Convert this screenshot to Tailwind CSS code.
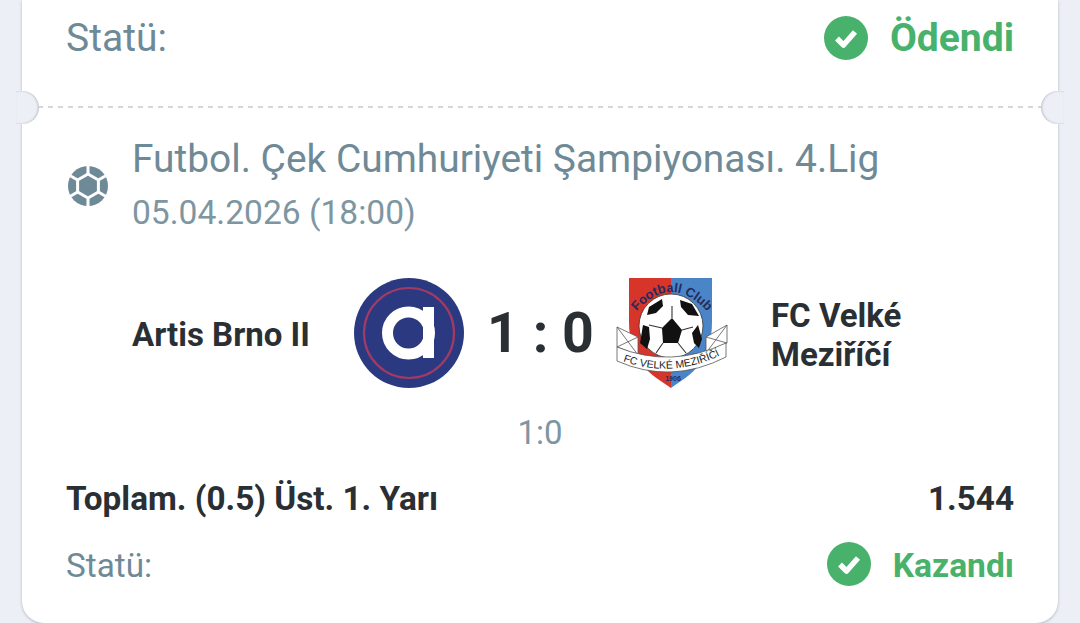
<!DOCTYPE html>
<html>
  <head>
    <meta charset="UTF-8" />
    <script src="https://cdn.jsdelivr.net/npm/@tailwindcss/browser@4"></script>
  </head>
  <body class="bg-[#eceff5] overflow-hidden font-['Roboto',sans-serif]">
    <div class="relative h-[623px] w-[1036px] ml-[22px] bg-white rounded-b-[22px] shadow-[0_1px_3px_rgba(70,80,100,0.35)]">
      <!-- paid row -->
      <div class="flex items-center justify-between h-[76px] px-[44px]">
        <span class="text-[39px] text-[#6f8a97]">Statü:</span>
        <div class="flex items-center gap-[22px]">
          <svg class="w-[44px] h-[44px] mt-[-1px]" viewBox="0 0 44 44">
            <circle cx="22" cy="22" r="22" fill="#48b16b" />
            <path d="M13 22.5l6.5 6.5L31 16" fill="none" stroke="#fff" stroke-width="5.5" stroke-linejoin="round" />
          </svg>
          <span class="text-[39px] font-bold text-[#48b16b]">Ödendi</span>
        </div>
      </div>

      <!-- perforation -->
      <div class="mt-[30px] mx-[16px] h-[2px] bg-[repeating-linear-gradient(90deg,#d3d6da_0_5px,transparent_5px_10px)]"></div>
      <div class="absolute left-[-6px] top-[91px] w-[23px] h-[33px] rounded-r-full bg-[#eceff5] shadow-[inset_-1px_0_2px_rgba(70,80,100,0.3)]"></div>
      <div class="absolute right-[-6px] top-[91px] w-[23px] h-[33px] rounded-l-full bg-[#eceff5] shadow-[inset_1px_0_2px_rgba(70,80,100,0.3)]"></div>

      <!-- league -->
      <div class="flex items-center gap-[24px] pl-[46px] mt-[27px]">
        <svg class="w-[40px] h-[40px] shrink-0 mt-[3px]" viewBox="-20 -20 40 40">
          <circle r="20" fill="#6f8a97" />
          <g stroke="#fff" stroke-width="3" fill="none">
            <polygon points="0,-12 10.4,-6 10.4,6 0,12 -10.4,6 -10.4,-6" />
            <path d="M0-12V-21M10.4-6L19-11M10.4 6L19 11M0 12V21M-10.4 6L-19 11M-10.4-6L-19-11" />
          </g>
        </svg>
        <div class="flex flex-col">
          <span class="text-[38.9px] leading-[48px] text-[#6f8a97]">Futbol. Çek Cumhuriyeti Şampiyonası. 4.Lig</span>
          <span class="text-[33.6px] leading-[40px] mt-[10px] text-[#7d96a2]">05.04.2026 (18:00)</span>
        </div>
      </div>

      <!-- teams -->
      <div class="flex items-center mt-[44px] h-[112px] pl-[110px]">
        <span class="w-[221px] mt-[3px] text-[33px] font-bold text-[#2a2f33]">Artis Brno II</span>
        <svg class="w-[112px] h-[112px] shrink-0" viewBox="0 0 112 112">
          <circle cx="56" cy="56" r="55" fill="#2b3a80" />
          <circle cx="56" cy="56" r="45" fill="none" stroke="#a33a64" stroke-width="2.2" />
          <circle cx="55.5" cy="56" r="21" fill="none" stroke="#fff" stroke-width="11" />
          <rect x="70" y="30" width="11" height="51" fill="#fff" />
        </svg>
        <span class="w-[151px] mt-[1px] text-center text-[55.5px] leading-none font-bold text-[#2a2f33]">1 : 0</span>
        <svg class="w-[112px] h-[112px] shrink-0" viewBox="0 0 112 112">
          <path d="M13 1H55V111C36 98 13 86 13 45Z" fill="#d8352a" />
          <path d="M55 1H96V45C96 86 74 98 55 111Z" fill="#4a85c8" />
          <defs>
            <path id="arcTop" d="M16 40Q55 -10 96 40" />
            <path id="arcBand" d="M4 83Q55 103 107 77" />
          </defs>
          <circle cx="55" cy="49" r="32" fill="#fff" stroke="#333" stroke-width="0.8" />
          <polygon points="56,41 66,53 62,66 47,66 46,51" fill="#111" />
          <path d="M64 23L76 27L83 39L72 38L65 30Z" fill="#111" />
          <path d="M46 22L33 30L31 38L40 36L47 29Z" fill="#111" />
          <path d="M27 48L24 66L31 72L34 62L33 50ZM82 48L86 62L83 71L78 66L76 56Z" fill="#111" />
          <path d="M56 41V29M46 51L33 48M66 53L77 50M47 66L40 76M62 66L70 76" stroke="#333" stroke-width="1.1" />
          <text font-family="Liberation Sans" font-size="13" font-weight="700" fill="#232c5c" text-anchor="middle"><textPath href="#arcTop" startOffset="50%">Football Club</textPath></text>
          <path d="M1 50L22 60V78L1 70ZM1 50L22 78M22 60L1 70M111 48L90 60V76L111 66ZM111 48L90 76M90 60L111 66" fill="#fff" stroke="#555" stroke-width="0.8" />
          <path d="M1 70Q55 92 110 66V80Q55 108 1 84Z" fill="#fff" stroke="#555" stroke-width="0.8" />
          <text font-family="Liberation Sans" font-size="10.5" fill="#222" text-anchor="middle"><textPath href="#arcBand" startOffset="50%">FC VELKÉ MEZIŘÍČÍ</textPath></text>
          <text x="57" y="104" text-anchor="middle" font-family="Liberation Sans" font-size="7" font-weight="700" fill="#232c5c">1906</text>
        </svg>
        <span class="ml-[43px] mt-[3px] text-[33px] leading-[39px] font-bold text-[#2a2f33]">FC Velké<br />Meziříčí</span>
      </div>

      <div class="text-center text-[33px] leading-[36px] mt-[26px] text-[#7d96a2]">1:0</div>

      <!-- bet -->
      <div class="flex items-center justify-between px-[44px] mt-[29px] leading-[38px] text-[33.3px] font-bold text-[#2a2f33]">
        <span>Toplam. (0.5) Üst. 1. Yarı</span>
        <span>1.544</span>
      </div>

      <!-- won row -->
      <div class="flex items-center justify-between px-[44px] mt-[23px]">
        <span class="text-[33.3px] text-[#6f8a97]">Statü:</span>
        <div class="flex items-center gap-[22px]">
          <svg class="w-[44px] h-[44px] mt-[-5px]" viewBox="0 0 44 44">
            <circle cx="22" cy="22" r="22" fill="#48b16b" />
            <path d="M13 22.5l6.5 6.5L31 16" fill="none" stroke="#fff" stroke-width="5.5" stroke-linejoin="round" />
          </svg>
          <span class="text-[33.6px] font-bold text-[#48b16b]">Kazandı</span>
        </div>
      </div>
    </div>
  </body>
</html>
